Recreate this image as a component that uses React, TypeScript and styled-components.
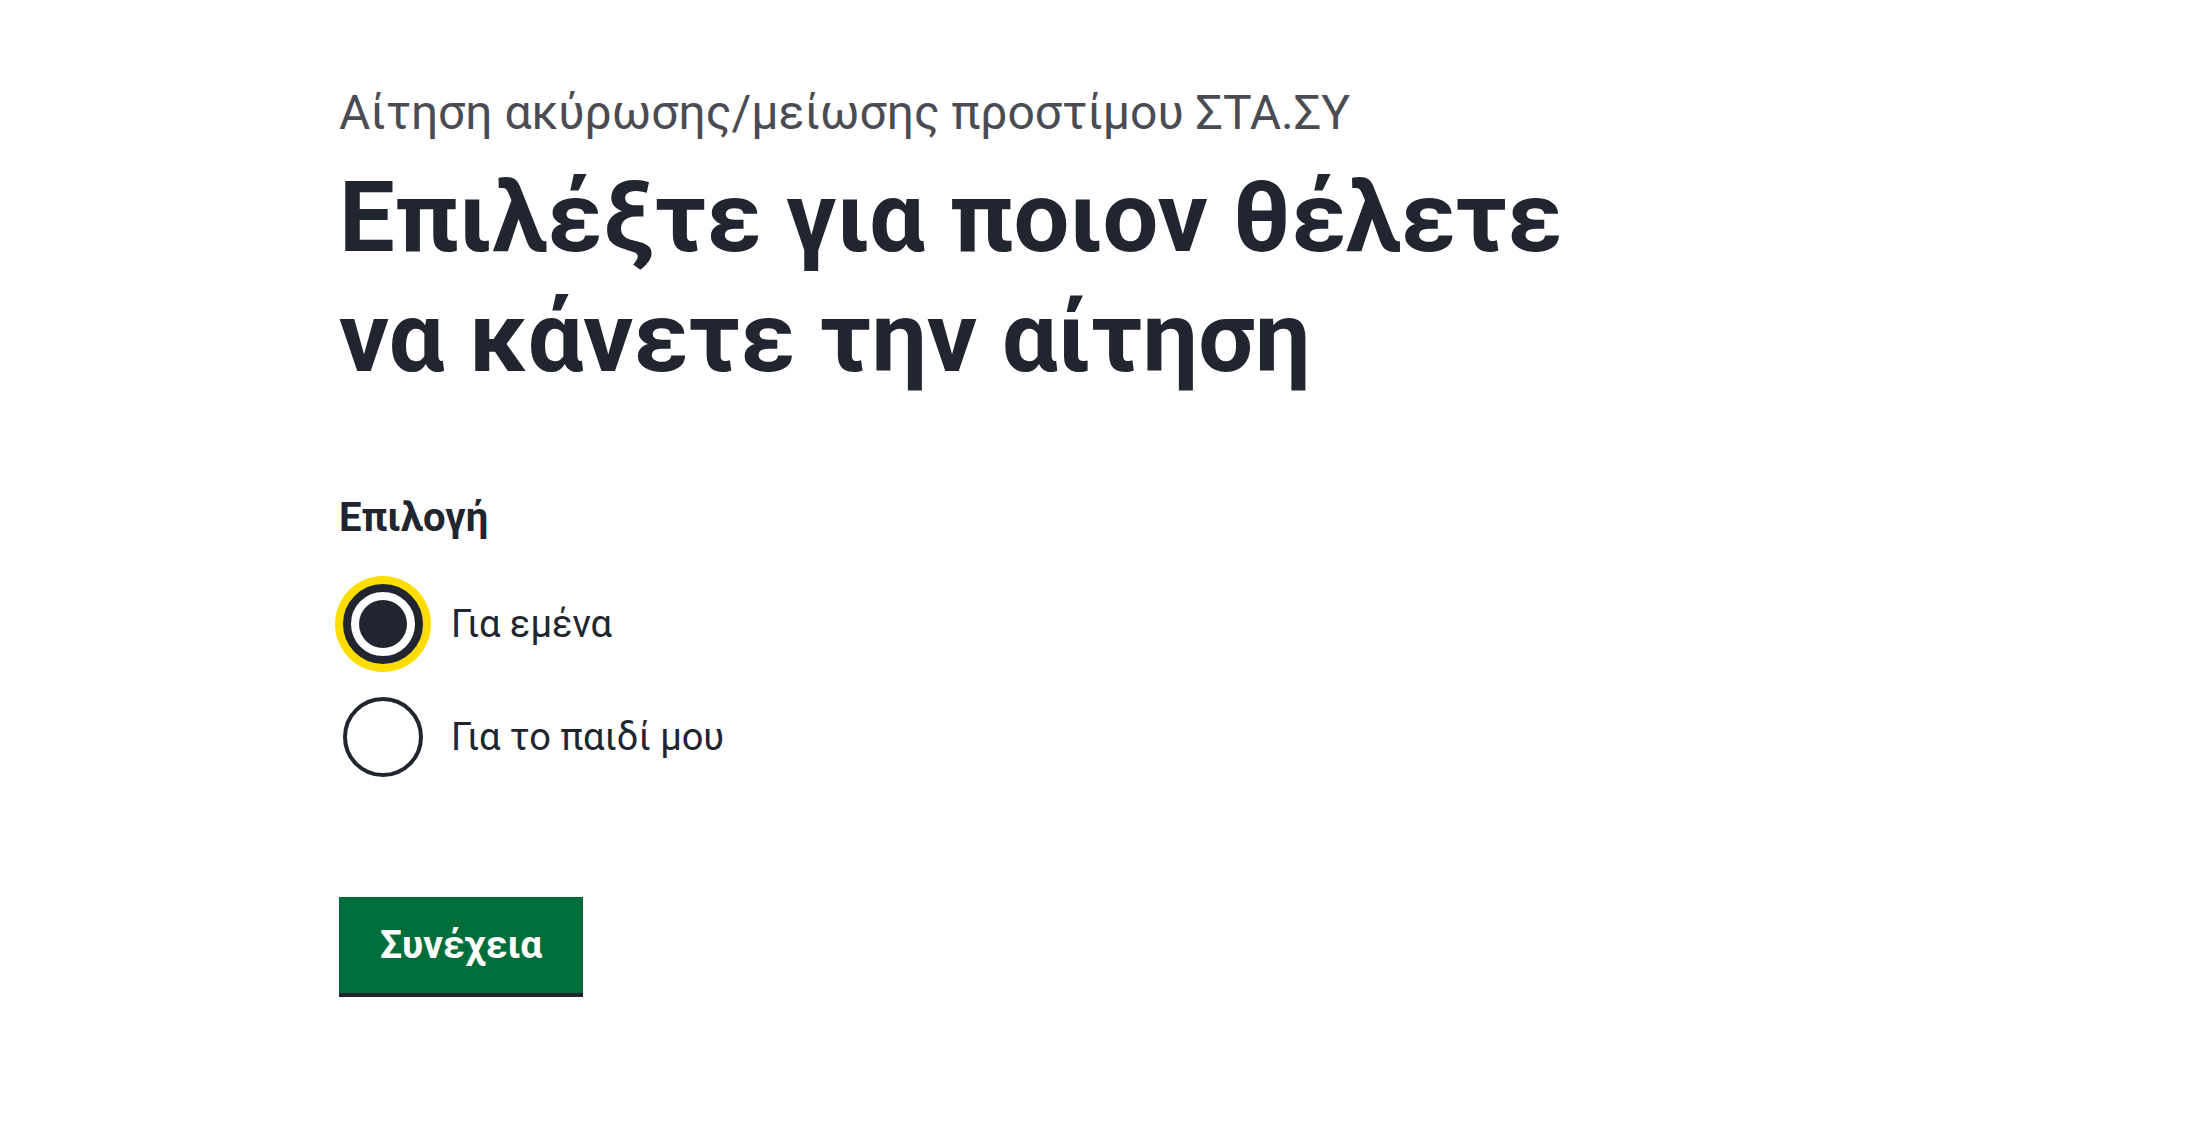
import { useState } from 'react';
import styled, { createGlobalStyle } from 'styled-components';

const GlobalStyle = createGlobalStyle`
  html, body {
    margin: 0;
    padding: 0;
    background: #ffffff;
  }
  body {
    font-family: Roboto, "Noto Sans", "Liberation Sans", sans-serif;
    color: #21252f;
  }
`;

const Main = styled.main`
  padding: 83px 0 0 339px;
  display: flex;
  flex-direction: column;
  align-items: flex-start;
`;

const Caption = styled.span`
  font-size: 48px;
  line-height: 60px;
  font-weight: 400;
  color: #4b4c53;
  margin-bottom: 14px;
`;

const Heading = styled.h1`
  margin: 0 0 96px;
  max-width: 1300px;
  font-size: 99px;
  line-height: 120px;
  font-weight: 700;
  color: #21252f;
`;

const Fieldset = styled.fieldset`
  border: 0;
  margin: 0;
  padding: 0;
  display: flex;
  flex-direction: column;
`;

const Legend = styled.legend`
  padding: 0;
  margin-bottom: 41px;
  font-size: 40px;
  line-height: 50px;
  font-weight: 700;
  color: #21252f;
`;

const Options = styled.div`
  display: flex;
  flex-direction: column;
  gap: 33px;
`;

const Option = styled.label`
  display: flex;
  align-items: center;
  gap: 28px;
  height: 80px;
  padding-left: 4px;
  cursor: pointer;

  input {
    position: absolute;
    opacity: 0;
    width: 0;
    height: 0;
  }
`;

const Circle = styled.span<{ $checked: boolean; $focused: boolean }>`
  box-sizing: border-box;
  width: 80px;
  height: 80px;
  border-radius: 50%;
  border: ${({ $checked }) => ($checked ? '8px' : '4px')} solid #21252f;
  background: #ffffff;
  display: flex;
  align-items: center;
  justify-content: center;
  box-shadow: ${({ $focused }) => ($focused ? '0 0 0 8px #ffdd00' : 'none')};
  flex-shrink: 0;

  &::after {
    content: '';
    width: 48px;
    height: 48px;
    border-radius: 50%;
    background: #21252f;
    display: ${({ $checked }) => ($checked ? 'block' : 'none')};
  }
`;

const OptionText = styled.span`
  font-size: 38px;
  line-height: 50px;
  color: #21252f;
`;

const Button = styled.button`
  margin-top: 120px;
  border: 0;
  border-bottom: 4px solid #21252f;
  border-radius: 0;
  padding: 28px 41px;
  background: #006e3a;
  color: #ffffff;
  font-family: Roboto, "Noto Sans", "Liberation Sans", sans-serif;
  font-size: 39px;
  line-height: 40px;
  font-weight: 700;
  cursor: pointer;
`;

const options = [
  { value: 'me', label: 'Για εμένα' },
  { value: 'child', label: 'Για το παιδί μου' },
];

const App = () => {
  const [choice, setChoice] = useState('me');

  return (
    <>
      <GlobalStyle />
      <Main>
        <Caption>Αίτηση ακύρωσης/μείωσης προστίμου ΣΤΑ.ΣΥ</Caption>
        <Heading>Επιλέξτε για ποιον θέλετε να κάνετε την αίτηση</Heading>
        <Fieldset>
          <Legend>Επιλογή</Legend>
          <Options>
            {options.map((option, i) => (
              <Option key={option.value}>
                <input
                  type="radio"
                  name="who"
                  value={option.value}
                  checked={choice === option.value}
                  onChange={() => setChoice(option.value)}
                />
                <Circle $checked={choice === option.value} $focused={i === 0 && choice === option.value} />
                <OptionText>{option.label}</OptionText>
              </Option>
            ))}
          </Options>
        </Fieldset>
        <Button type="button">Συνέχεια</Button>
      </Main>
    </>
  );
};

export default App;
